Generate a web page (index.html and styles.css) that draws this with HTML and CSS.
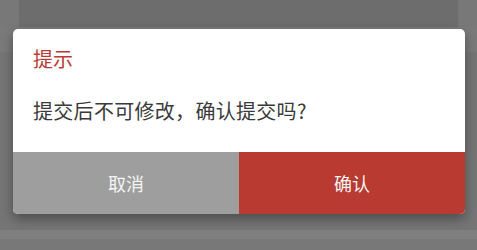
FILE: index.html
```html
<!DOCTYPE html>
<html lang="zh-CN">
<head>
<meta charset="utf-8">
<link rel="stylesheet" href="styles.css">
</head>
<body>
<div class="backdrop">
  <div class="bg-card"></div>
  <div class="bg-row"></div>
  <div class="bg-spacer"></div>
  <div class="bg-band"></div>
</div>
<div class="dialog">
  <div class="dialog-body">
    <div class="dialog-title">提示</div>
    <div class="dialog-msg">提交后不可修改，确认提交吗?</div>
  </div>
  <div class="dialog-actions">
    <div class="btn btn-cancel">取消</div>
    <div class="btn btn-confirm">确认</div>
  </div>
</div>
</body>
</html>
```

FILE: styles.css
```css
html, body {
  margin: 0;
  padding: 0;
}
body {
  width: 477px;
  height: 250px;
  overflow: hidden;
  background: #787878;
  font-family: "Noto Sans CJK SC", "Noto Sans", sans-serif;
  position: relative;
}
.backdrop {
  display: flex;
  flex-direction: column;
}
.bg-card {
  height: 27px;
  margin: 0 19px;
  background: #6d6d6d;
}
.bg-row {
  height: 25px;
  background: #7a7a7a;
}
.bg-spacer {
  height: 178px;
  background: #757575;
}
.bg-band {
  height: 9px;
  background: #7f7f7f;
}
.dialog {
  position: absolute;
  left: 13px;
  top: 29px;
  width: 452px;
  height: 185px;
  background: #fff;
  border-radius: 5px;
  overflow: hidden;
  box-shadow: 0 5px 12px rgba(0, 0, 0, 0.35);
  display: flex;
  flex-direction: column;
}
.dialog-body {
  flex: 1;
  padding: 18px 20px 0;
}
.dialog-title {
  font-size: 20px;
  line-height: 24px;
  color: #b83d37;
}
.dialog-msg {
  margin-top: 27px;
  font-size: 20px;
  line-height: 26px;
  letter-spacing: 0.3px;
  color: #3a3a3a;
}
.dialog-actions {
  display: flex;
  height: 62px;
}
.btn {
  flex: 1;
  text-align: center;
  line-height: 62px;
  font-size: 18px;
  color: #f4f4f4;
}
.btn-cancel {
  background: #9e9e9e;
}
.btn-confirm {
  background: #b83a31;
}
```
